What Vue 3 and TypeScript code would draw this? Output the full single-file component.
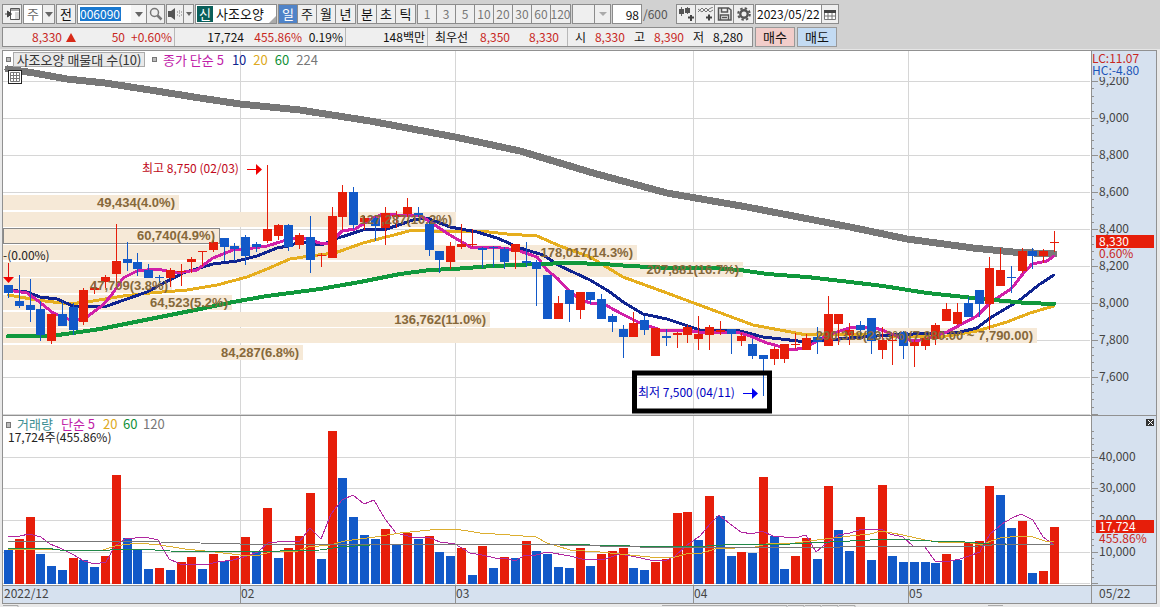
<script setup lang="ts">
import { ref } from 'vue'

type Tone = 'r' | 'b'
type Candle = [Tone, number, number, number, number]
type Point = [number, number]

const code = ref('006090')
const unit = ref('주')
const count = ref('98')
const date = ref('2023/05/22')
const period = ref('일')

const periods = ['일', '주', '월', '년']
const intraday = ['분', '초', '틱']
const intervals = ['1', '3', '5', '10', '20', '30', '60', '120']

const STEP = 10.784
const centre = (i: number): number => Math.round(8.5 + i * STEP - 0.5) + 0.5

// tone, wick top, wick bottom, body top, body bottom
const candles: Candle[] = [
  ['b', 285, 298, 285, 293], ['b', 275, 308, 301, 306], ['b', 279, 322, 305, 310], ['b', 301, 341, 309, 335],
  ['r', 314, 344, 314, 341], ['b', 301, 326, 314, 326], ['b', 303, 335, 307, 330], ['r', 288, 325, 290, 322],
  ['r', 282, 294, 288, 290], ['r', 275, 288, 277, 282], ['r', 224, 283, 261, 274], ['b', 242, 271, 259, 263],
  ['b', 253, 276, 262, 269], ['b', 264, 278, 270, 278], ['b', 275, 283, 277, 278], ['r', 268, 287, 270, 278],
  ['r', 264, 286, 271, 272], ['r', 257, 273, 259, 262], ['r', 251, 266, 251, 252], ['r', 240, 252, 242, 250],
  ['b', 238, 261, 238, 247], ['b', 243, 261, 246, 249], ['b', 235, 265, 237, 256], ['b', 242, 252, 244, 247],
  ['r', 165, 243, 229, 241], ['r', 224, 240, 225, 236], ['b', 224, 251, 225, 247], ['r', 233, 249, 235, 245],
  ['b', 216, 273, 237, 260], ['r', 253, 267, 255, 256], ['r', 207, 258, 216, 258], ['r', 185, 230, 192, 217],
  ['b', 187, 229, 192, 225], ['r', 216, 230, 218, 222], ['b', 215, 241, 218, 226], ['r', 207, 245, 213, 228],
  ['r', 211, 228, 215, 217], ['r', 198, 217, 207, 214], ['b', 207, 217, 213, 215], ['b', 221, 256, 224, 250],
  ['b', 251, 273, 251, 260], ['r', 242, 269, 246, 262], ['r', 224, 249, 244, 247], ['r', 229, 247, 244, 245],
  ['b', 247, 268, 248, 250], ['b', 246, 267, 247, 248], ['b', 247, 269, 249, 262], ['r', 244, 269, 244, 252],
  ['b', 242, 267, 261, 263], ['b', 260, 306, 262, 269], ['b', 275, 319, 275, 319], ['r', 296, 319, 303, 319],
  ['b', 290, 322, 290, 304], ['r', 292, 319, 292, 310], ['b', 292, 304, 292, 300], ['b', 294, 319, 299, 319],
  ['b', 314, 332, 316, 322], ['b', 325, 358, 329, 337], ['r', 312, 337, 323, 337], ['b', 316, 335, 320, 330],
  ['r', 328, 356, 328, 356], ['b', 329, 346, 336, 338], ['r', 332, 348, 333, 335], ['r', 325, 343, 327, 335],
  ['r', 316, 350, 334, 339], ['r', 325, 350, 327, 335], ['r', 321, 335, 330, 332], ['b', 329, 354, 329, 334],
  ['r', 333, 346, 336, 341], ['b', 339, 359, 344, 356], ['b', 355, 396, 355, 359], ['r', 347, 365, 349, 359],
  ['r', 344, 363, 344, 359], ['r', 333, 349, 344, 345], ['r', 334, 350, 338, 350], ['b', 327, 354, 337, 342],
  ['r', 296, 346, 314, 346], ['r', 314, 345, 314, 324], ['r', 323, 345, 330, 335], ['b', 321, 335, 325, 330],
  ['b', 318, 354, 318, 341], ['r', 327, 359, 340, 350], ['r', 335, 365, 340, 341], ['b', 331, 359, 332, 346],
  ['r', 340, 367, 342, 346], ['r', 336, 350, 338, 346], ['r', 323, 345, 325, 339], ['r', 303, 321, 309, 321],
  ['r', 303, 325, 312, 324], ['b', 297, 317, 303, 317], ['b', 290, 317, 290, 304], ['r', 257, 330, 268, 304],
  ['r', 248, 286, 270, 286], ['b', 266, 293, 277, 278], ['r', 248, 273, 251, 271], ['b', 248, 269, 251, 256],
  ['r', 249, 263, 251, 256], ['r', 231, 252, 242, 243],
]

const volumes: [Tone, number][] = [
  ['b', 550], ['r', 539], ['r', 517], ['b', 554], ['b', 566], ['b', 570], ['r', 558], ['b', 560], ['b', 567], ['r', 556],
  ['r', 475], ['b', 538], ['b', 549], ['b', 569], ['r', 568], ['b', 570], ['r', 562], ['r', 557], ['b', 569], ['r', 554],
  ['b', 561], ['r', 556], ['r', 537], ['b', 552], ['r', 508], ['b', 558], ['r', 548], ['r', 536], ['r', 493], ['b', 559],
  ['r', 431], ['b', 478], ['b', 517], ['b', 535], ['b', 539], ['r', 529], ['b', 544], ['r', 533], ['b', 539], ['r', 536],
  ['b', 552], ['b', 556], ['r', 548], ['b', 575], ['r', 546], ['b', 568], ['r', 557], ['b', 558], ['r', 541], ['b', 551],
  ['b', 554], ['b', 567], ['b', 568], ['r', 548], ['b', 566], ['r', 554], ['r', 551], ['r', 548], ['b', 568], ['b', 570],
  ['r', 562], ['r', 559], ['r', 513], ['r', 512], ['b', 540], ['r', 496], ['b', 516], ['b', 556], ['r', 552], ['b', 553],
  ['r', 477], ['b', 536], ['b', 569], ['r', 556], ['r', 538], ['b', 559], ['r', 486], ['b', 530], ['b', 551], ['r', 517],
  ['b', 560], ['r', 485], ['b', 556], ['b', 562], ['b', 562], ['b', 562], ['b', 563], ['r', 554], ['b', 560], ['r', 543],
  ['r', 541], ['r', 486], ['b', 495], ['b', 528], ['r', 521], ['b', 573], ['r', 571], ['r', 527],
]

const bands = [
  { end: 179, text: '49,434(4.0%)' },
  { end: 456, text: '127,287(10.2%)' },
  { end: 219, text: '60,740(4.9%)', current: true },
  { end: 637, text: '178,017(14.3%)' },
  { end: 743, text: '207,881(16.7%)' },
  { end: 172, text: '47,709(3.8%)' },
  { end: 232, text: '64,523(5.2%)' },
  { end: 490, text: '136,762(11.0%)' },
  { end: 1037, text: '290,318(23.3%)(7,880.00 ~ 7,790.00)' },
  { end: 303, text: '84,287(6.8%)' },
].map((b, i) => ({ ...b, y: Math.round(195 + i * 16.65) }))

const path = (pts: Point[]): string => pts.map(p => p.join(',')).join(' ')

const priceLines: { cls: string; pts: Point[] }[] = [
  { cls: 'ma224', pts: [[8, 69], [34, 73], [67, 79], [105, 83], [150, 90], [200, 98], [240, 104], [300, 110], [370, 121], [455, 137], [520, 151], [570, 166], [593, 173], [667, 193], [747, 207], [850, 227], [907, 239], [973, 248], [1013, 252], [1054, 254]] },
  { cls: 'ma20', pts: [[8, 295], [37, 300], [70, 304], [93, 301], [123, 296], [150, 293], [187, 290], [217, 285], [247, 277], [267, 269], [290, 259], [310, 256], [335, 253], [363, 243], [390, 236], [413, 230], [427, 231], [480, 231], [507, 234], [537, 236], [560, 246], [590, 257], [623, 277], [667, 293], [710, 309], [753, 325], [807, 335], [850, 334], [870, 335], [907, 337], [947, 336], [977, 331], [1007, 322], [1030, 313], [1054, 306]] },
  { cls: 'ma10', pts: [[8, 290], [27, 292], [40, 297], [57, 299], [73, 306], [107, 306], [127, 299], [147, 292], [160, 285], [183, 273], [213, 264], [237, 261], [257, 256], [277, 248], [288, 246], [300, 242], [322, 245], [335, 239], [363, 230], [387, 229], [413, 220], [427, 218], [450, 227], [477, 232], [497, 238], [520, 248], [543, 255], [560, 266], [590, 280], [610, 292], [623, 302], [643, 314], [667, 319], [700, 330], [740, 331], [763, 337], [807, 342], [850, 338], [890, 335], [937, 333], [960, 332], [977, 328], [990, 318], [1020, 300], [1040, 284], [1054, 275]] },
  { cls: 'ma5', pts: [[8, 290], [27, 293], [37, 300], [53, 313], [73, 321], [87, 317], [103, 305], [113, 293], [123, 278], [137, 271], [157, 269], [177, 273], [197, 270], [213, 258], [233, 250], [253, 248], [267, 246], [283, 241], [300, 237], [320, 243], [330, 243], [342, 231], [355, 229], [373, 218], [383, 214], [397, 215], [420, 215], [430, 222], [450, 235], [472, 248], [493, 247], [517, 250], [537, 257], [547, 270], [558, 279], [568, 290], [580, 299], [590, 303], [602, 303], [620, 313], [640, 323], [663, 331], [687, 330], [703, 333], [737, 332], [750, 336], [767, 343], [793, 350], [807, 347], [827, 335], [853, 327], [873, 327], [890, 333], [900, 338], [913, 341], [927, 339], [947, 332], [977, 316], [990, 303], [1012, 288], [1022, 275], [1032, 264], [1047, 261], [1054, 256]] },
  { cls: 'ma60', pts: [[8, 336], [50, 336], [73, 333], [100, 329], [150, 319], [200, 309], [233, 302], [267, 296], [290, 293], [320, 289], [360, 282], [400, 274], [430, 270], [453, 269], [493, 266], [537, 264], [570, 263], [603, 264], [630, 266], [670, 268], [713, 268], [740, 270], [767, 274], [807, 277], [850, 282], [883, 286], [927, 293], [983, 299], [1027, 303], [1054, 304]] },
]

const volumeLines: { cls: string; pts: Point[] }[] = [
  { cls: 'v5', pts: [[8, 536], [20, 536], [29, 534], [41, 537], [50, 544], [60, 548], [72, 554], [84, 561], [95, 564], [106, 562], [115, 546], [125, 539], [145, 537], [158, 540], [169, 559], [180, 564], [205, 565], [217, 562], [233, 560], [247, 556], [258, 552], [268, 543], [277, 542], [300, 541], [310, 528], [321, 539], [331, 514], [342, 500], [353, 495], [364, 504], [374, 500], [385, 519], [396, 533], [412, 537], [428, 537], [440, 542], [455, 544], [470, 553], [482, 555], [495, 558], [505, 558], [515, 561], [525, 555], [536, 555], [547, 552], [570, 556], [582, 559], [602, 560], [620, 554], [636, 557], [650, 560], [665, 561], [675, 556], [687, 545], [700, 536], [710, 524], [719, 515], [730, 524], [741, 532], [752, 534], [762, 531], [773, 536], [795, 538], [806, 535], [816, 552], [827, 543], [838, 535], [850, 533], [862, 529], [881, 529], [890, 534], [903, 537], [913, 546], [925, 547], [935, 561], [950, 561], [960, 559], [969, 556], [980, 552], [990, 534], [1002, 524], [1012, 518], [1021, 514], [1033, 520], [1043, 537], [1053, 544]] },
  { cls: 'v20', pts: [[8, 550], [30, 549], [60, 550], [100, 551], [115, 546], [137, 543], [160, 545], [185, 549], [215, 552], [240, 555], [260, 555], [270, 552], [298, 551], [308, 547], [330, 545], [345, 541], [375, 537], [400, 533], [430, 530], [440, 529], [455, 529], [480, 533], [510, 535], [536, 537], [547, 543], [570, 550], [600, 552], [630, 555], [650, 557], [665, 558], [675, 557], [690, 553], [702, 553], [715, 549], [755, 547], [770, 543], [795, 543], [825, 539], [850, 536], [870, 534], [881, 531], [903, 535], [925, 540], [938, 542], [965, 542], [980, 545], [1000, 538], [1020, 536], [1033, 537], [1045, 541], [1054, 542]] },
  { cls: 'v60', pts: [[8, 548], [45, 548], [60, 550], [110, 550], [140, 549], [170, 551], [240, 552], [320, 550], [340, 547], [370, 545], [450, 544], [590, 545], [630, 546], [690, 547], [740, 544], [790, 544], [850, 541], [890, 539], [930, 541], [965, 542], [990, 544], [1054, 545]] },
  { cls: 'v120', pts: [[8, 541], [120, 541], [200, 543], [240, 544], [400, 544], [560, 545], [640, 547], [840, 547], [980, 546], [1005, 544], [1054, 545]] },
]

const priceTicks = ['9,200', '9,000', '8,800', '8,600', '8,400', '8,200', '8,000', '7,800', '7,600', ''].map((text, i) => ({ text, y: 81 + i * 37 }))
const volumeTicks = [
  { text: '40,000', y: 457 }, { text: '30,000', y: 488 }, { text: '20,000', y: 520 }, { text: '10,000', y: 552 }, { text: '', y: 583 },
]
const minorTicks: number[] = []
for (let k = 0; k < 46; k++) if (k % 5) minorTicks.push(Math.round(81 + k * 7.4))
for (let k = 1; k < 25; k++) if (k % 5) minorTicks.push(Math.round(583 - k * 6.32))

const months = [{ text: '02', x: 240 }, { text: '03', x: 455 }, { text: '04', x: 693 }, { text: '05', x: 908 }]
</script>

<template>
  <main class="app">
    <header class="bars">
      <div class="toolbar">
        <button class="btn icon" aria-label="패널">
          <svg width="15" height="14" viewBox="0 0 15 14"><path d="M5.5 1.5h9v11h-9zM5 3h10" fill="#fff" stroke="#555" /><path d="M10 5h4v7h-4z" fill="#d8d8d8" /><path d="M0 7h3M2.500 4v6l4-3z" fill="#444" stroke="#444" /></svg>
        </button>
        <div class="combo unit">
          <select v-model="unit" aria-label="구분"><option>주</option></select>
          <span class="drop"><svg width="8" height="5"><path d="M0 0h8L4 5z" fill="#666" /></svg></span>
        </div>
        <button class="btn prev">전</button>
        <div class="combo code">
          <input v-model="code" aria-label="종목코드" />
          <span class="drop plain"><svg width="8" height="5"><path d="M0 0h8L4 5z" fill="#666" /></svg></span>
          <button class="inner" aria-label="검색">
            <svg width="14" height="14" viewBox="0 0 14 14" fill="none" stroke="#777"><circle cx="5.500" cy="5.500" r="4" stroke-width="1.500" /><path d="M8.500 8.500l4 4" stroke-width="2.500" /></svg>
          </button>
        </div>
        <div class="combo sound">
          <button class="inner" aria-label="소리">
            <svg width="14" height="12" viewBox="0 0 14 12"><path d="M0 3h3l4-3v12L3 9H0z" fill="#555" /><path d="M9 4h1M9 7h1M11 3h1M11 5h1M11 8h1M13 4h1M13 7h1" stroke="#777" /></svg>
          </button>
          <button class="inner small" aria-label="소리 선택"><svg width="6" height="4"><path d="M0 0h6L3 4z" fill="#666" /></svg></button>
        </div>
        <div class="combo stock">
          <span class="tag">신</span><span class="name">사조오양</span>
          <svg class="corner" width="7" height="7"><path d="M7 0v7H0z" fill="#aaa" /></svg>
        </div>
        <div class="group">
          <button v-for="p in periods" :key="p" class="seg" :class="{ on: p === period }" @click="period = p">{{ p }}</button>
        </div>
        <div class="group">
          <button v-for="p in intraday" :key="p" class="seg">{{ p }}</button>
        </div>
        <div class="group">
          <button v-for="p in intervals" :key="p" class="seg dim">{{ p }}</button>
        </div>
        <div class="combo custom">
          <select aria-label="사용자 주기" disabled><option></option></select>
          <span class="drop"><svg width="8" height="4"><path d="M0 0h8L4 4z" fill="#aaa" /></svg></span>
        </div>
        <input v-model="count" class="count" aria-label="조회 개수" />
        <span class="total">/600</span>
        <div class="group tools">
          <button class="seg" aria-label="차트 추가"><svg width="15" height="14" viewBox="0 0 15 14"><path d="M2.500 0v9M8.500 0v7" stroke="#666" /><path d="M0 2h5v5H0zM6 1h5v5H6z" fill="#555" /><path d="M9 10.500h6M12 8v6" stroke="#444" stroke-width="2" /></svg></button>
          <button class="seg" aria-label="지표 추가"><svg width="15" height="14" viewBox="0 0 15 14"><path d="M0 5l4-4 4 4 3-3 4-2M0 2l4 3 4-4 4 4 3-2" fill="none" stroke="#777" /><path d="M8 10.500h6M11 7.500v6" stroke="#444" stroke-width="2" /></svg></button>
          <button class="seg" aria-label="저장"><svg width="15" height="14" viewBox="0 0 15 14"><path d="M1.500 1h10l2.500 2v10h-12.500zM4.500 1v4h6V1M3.500 13V8h8v5M5 10.500h5" fill="#eee" stroke="#555" stroke-width="1.500" /></svg></button>
          <button class="seg" aria-label="설정"><svg width="14" height="14" viewBox="0 0 14 14" fill="none" stroke="#555"><circle cx="7" cy="7" r="3.700" stroke-width="2.400" /><circle cx="7" cy="7" r="5.800" stroke-width="2" stroke-dasharray="2.400 2.155" /></svg></button>
        </div>
        <div class="combo date">
          <input v-model="date" aria-label="날짜" />
          <button class="inner" aria-label="달력"><svg width="12" height="11" viewBox="0 0 12 11"><path d="M.5 1.500h11v9H.5zM4 4v7M8 4v7M1 7h10" fill="#fff" stroke="#777" /><path d="M0 1h12v3H0z" fill="#444" /></svg></button>
        </div>
      </div>

      <div class="quote">
        <div class="cells">
          <div class="cell now"><b class="up">8,330</b><svg class="tri" width="10" height="9"><path d="M5 0l5 9H0z" fill="#d82a18" /></svg><b class="up diff">50</b><b class="up rate">+0.60%</b></div>
          <div class="cell vol"><b>17,724</b><b class="up ratio">455.86%</b><b class="turn">0.19%</b></div>
          <div class="cell amount"><b>148백만</b></div>
          <div class="cell best"><b>최우선</b><b class="up">8,350</b><b class="up ask">8,330</b></div>
          <div class="cell ohl"><b>시</b><b class="up">8,330</b><b>고</b><b class="up">8,390</b><b>저</b><b>8,280</b></div>
        </div>
        <button class="trade buy">매수</button>
        <button class="trade sell">매도</button>
      </div>
    </header>

    <section class="chart">
      <svg class="plot" viewBox="0 50 1160 557" role="img" aria-label="사조오양 일봉 차트">
        <rect x="0" y="50" width="1160" height="557" fill="#e9e9e9" />
        <rect x="2" y="50" width="1155" height="554" fill="#919191" />
        <rect x="3" y="51" width="1088" height="534" fill="#fff" />
        <rect x="1092" y="51" width="64" height="552" fill="#d6e1ef" />
        <rect x="3" y="586" width="1088" height="17" fill="#d6e1ef" />

        <g class="grid">
          <path v-for="t in priceTicks" :key="'p' + t.y" :d="`M3 ${t.y + 0.5}H1090`" />
          <path v-for="t in volumeTicks" :key="'v' + t.y" :d="`M3 ${t.y + 0.5}H1090`" />
          <path v-for="m in months" :key="m.x" :d="`M${m.x + 0.5} 51V585`" />
        </g>

        <rect v-for="b in bands" :key="b.y" x="3" :y="b.y" :width="b.end - 3" height="15" :class="['band', { current: b.current }]" />

        <polyline v-for="l in priceLines" :key="l.cls" :class="['line', l.cls]" :points="path(l.pts)" />
        <g v-for="(c, i) in candles" :key="i" :class="c[0]">
          <rect :x="centre(i) - 0.5" :y="c[1]" width="1" :height="c[2] - c[1]" />
          <rect :x="centre(i) - 4.5" :y="c[3]" width="9" :height="c[4] - c[3]" />
        </g>
        <text v-for="b in bands" :key="b.text" class="share" :x="b.end - 4" :y="b.y + 12">{{ b.text }}</text>

        <text x="3" y="260" class="ink">-(0.00%)</text>
        <path d="M8.500 263V278" stroke="#e01010" />
        <path d="M3 277h11l-5.500 6z" fill="#f00000" />
        <text x="142" y="173" class="high">최고 8,750 (02/03)</text>
        <path d="M247 169.500h9" stroke="#f00000" />
        <path d="M256 164v11l6-5.500z" fill="#f00000" />
        <rect x="634.500" y="373" width="135" height="38" fill="none" stroke="#000" stroke-width="5" />
        <text x="638" y="397" class="low">최저 7,500 (04/11)</text>
        <path d="M743 393.500h9" stroke="#0000f0" />
        <path d="M752 388v11l6-5.500z" fill="#0000f0" />

        <path d="M3 415.500H1156M3 585.500H1156M1091.500 51V603" stroke="#919191" />
        <rect v-for="(v, i) in volumes" :key="'b' + i" :class="v[0]" :x="centre(i) - 4.5" :y="v[1]" width="9" :height="584 - v[1]" />
        <polyline v-for="l in volumeLines" :key="l.cls" :class="['thin', l.cls]" :points="path(l.pts)" />

        <rect x="6.500" y="422.500" width="4" height="5" fill="#bbb" stroke="#777" />
        <text y="429" class="head"><tspan x="17" fill="#3b8d92">거래량</tspan><tspan x="61" fill="#c020a8">단순 5</tspan><tspan x="103" fill="#dda820">20</tspan><tspan x="123" fill="#109038">60</tspan><tspan x="143" fill="#777">120</tspan></text>
        <text x="8" y="442" class="ink">17,724주(455.86%)</text>

        <g stroke="#919191">
          <path v-for="t in priceTicks" :key="'tp' + t.y" :d="`M1092 ${t.y + 0.5}h6`" />
          <path v-for="t in volumeTicks" :key="'tv' + t.y" :d="`M1092 ${t.y + 0.5}h6`" />
          <path v-for="y in minorTicks" :key="'m' + y" :d="`M1092 ${y + 0.5}h2`" />
          <path v-for="m in months" :key="'mx' + m.x" :d="`M${m.x + 0.5} 586v17`" />
        </g>
        <g class="axis">
          <text v-for="t in priceTicks" :key="'lp' + t.y" x="1099" :y="t.y + 4">{{ t.text }}</text>
          <text v-for="t in volumeTicks" :key="'lv' + t.y" x="1099" :y="t.y + 4">{{ t.text }}</text>
          <text x="4" y="598">2022/12</text>
          <text v-for="m in months" :key="m.text" :x="m.x + 1" y="598">{{ m.text }}</text>
          <text x="1099" y="598">05/22</text>
        </g>
        <rect x="1092" y="51" width="64" height="26" fill="#d6e1ef" />
        <text x="1092" y="63" fill="#c8281e">LC:11.07</text>
        <text x="1092" y="75" fill="#1c55b8">HC:-4.80</text>
        <rect x="1096" y="235" width="58" height="13" fill="#e61e0a" />
        <text x="1099" y="246" fill="#fff">8,330</text>
        <text x="1099" y="258" fill="#c8281e">0.60%</text>
        <rect x="1096" y="520" width="58" height="13" fill="#e61e0a" />
        <text x="1099" y="531" fill="#fff">17,724</text>
        <text x="1099" y="543" fill="#c8281e">455.86%</text>

        <rect x="8.500" y="70.500" width="13" height="13" fill="#fff" stroke="#222" />
        <path d="M10.500 72.500h9v9h-9zM13.500 72v10M16.500 72v10M10 75.500h10M10 78.500h10" fill="none" stroke="#777" />

        <path d="M3 605.500h15v1.500M662 605.500h125v1.500M788 605.500h16v1.500M805 605.500h16v1.500M822 605.500h16v1.500M839 605.500h16v1.500M988 605.500h15" fill="none" stroke="#aaa" />
      </svg>

      <div class="legend">
        <i class="mark"></i>
        <button class="title">사조오양 매물대 수(10)</button>
        <i class="mark"></i>
        <span class="c5">종가 단순 5</span><span class="c10">10</span><span class="c20">20</span><span class="c60">60</span><span class="c224">224</span>
      </div>
      <button class="close" aria-label="닫기"><svg width="5" height="5"><path d="M0 0l5 5M5 0L0 5" stroke="#fff" /></svg></button>
    </section>
  </main>
</template>

<style>
body {
  margin: 0;
  background: #e9e9e9;
}
</style>

<style scoped>
.app {
  font-family: "Noto Sans CJK KR", sans-serif;
  font-size: 12px;
  line-height: 18px;
  color: #111;
  overflow: hidden;
}
button, input, select {
  font: inherit;
  color: inherit;
  margin: 0;
  padding: 0;
  border: 0;
  border-radius: 0;
  background: none;
  appearance: none;
  box-sizing: border-box;
  outline: 0;
  min-width: 0;
}
b { font-weight: 400; }
svg { flex: none; }
.bars {
  height: 50px;
  box-sizing: border-box;
  padding: 4px 2px 0;
  background: #d1d1d1;
  border-bottom: 1px solid #e6e6e6;
  white-space: nowrap;
}
.toolbar, .quote { display: flex; }
.quote { margin-top: 3px; }
.btn, .combo, .group, .count {
  height: 20px;
  flex: none;
  box-sizing: border-box;
  border: 1px solid #8c8c8c;
  background: #efefef;
}
.btn { display: flex; align-items: center; justify-content: center; width: 20px; margin-right: 1px; font-size: 13px; }
.combo { display: flex; align-items: stretch; background: #fff; margin-right: 1px; }
.drop, .inner {
  display: flex;
  flex: none;
  align-items: center;
  justify-content: center;
  width: 11px;
  background: #efefef;
  border-left: 1px solid #8c8c8c;
}
.drop.plain { width: 15px; border: 0; background: #f4f4f4; }
.inner { width: 18px; }
.inner.small { width: 10px; }
.unit { width: 32px; }
.unit select { flex: 1; padding-left: 3px; color: #666; font-size: 13px; }
.code { width: 88px; }
.code input { width: 41px; margin: 2px auto 2px 2px; background: #1878d0; color: #fff; line-height: 14px; }
.sound { width: 28px; }
.sound .inner:first-child { border: 0; flex: 1; }
.stock { width: 82px; position: relative; font-size: 13px; }
.tag { width: 16px; margin: 1px; background: #0a5f5a; color: #fff; text-align: center; line-height: 16px; }
.name { padding-left: 2px; }
.corner { position: absolute; right: 0; bottom: 0; }
.group { display: flex; margin-right: 1px; }
.seg {
  display: flex;
  flex: none;
  align-items: center;
  justify-content: center;
  width: 19px;
  border-right: 1px solid #8c8c8c;
  font-size: 13px;
}
.seg:last-child { border-right: 0; }
.seg.on { background: #4f83c8; color: #fff; }
.seg.dim { color: #777; font-size: 12px; }
.custom { width: 39px; background: #efefef; }
.custom select { flex: 1; }
.custom .drop { width: 15px; }
.count { width: 30px; background: #fff; text-align: right; padding-right: 2px; }
.total { width: 34px; color: #555; padding: 1px 0 0 1px; box-sizing: border-box; }
.date { width: 84px; }
.date input { flex: 1; padding-left: 1px; }
.date .inner { width: 17px; }

.cells {
  display: flex;
  width: 751px;
  height: 20px;
  box-sizing: border-box;
  border: 1px solid #8c8c8c;
  background: #efefef;
}
.cell { display: flex; flex: none; align-items: center; justify-content: flex-end; box-sizing: border-box; border-right: 1px solid #b8b8b8; padding-right: 2px; }
.cell:last-child { border: 0; }
.up { color: #c8281e; }
.now { width: 172px; }
.tri { margin-left: 4px; }
.diff { width: 49px; text-align: right; }
.rate { width: 47px; text-align: right; }
.vol { width: 171px; }
.ratio { width: 58px; text-align: right; }
.turn { width: 41px; text-align: right; }
.amount { width: 82px; }
.best { width: 140px; gap: 12px; padding-right: 8px; }
.best .ask { margin-left: 7px; }
.cell.ohl { flex: 1; gap: 9px; padding-right: 9px; }
.trade { width: 40px; height: 20px; margin-left: 2px; border: 1px solid #999; flex: none; font-size: 13px; }
.buy { background: #f2cdca; }
.sell { background: #c3dbf3; }

.chart { position: relative; }
.plot { display: block; width: 100%; height: auto; }
.plot text { font-size: 12px; }
.plot .head { font-size: 13px; }
.grid path { stroke: #d6d6d6; }
.band { fill: #f6e9d7; }
.band.current { stroke: #888; shape-rendering: crispEdges; }
.plot .share { font-family: "Liberation Sans", sans-serif; font-size: 13px; font-weight: 700; fill: #86683a; text-anchor: end; }
.r { fill: #e61e0a; }
.b { fill: #1259c8; }
.line { fill: none; stroke-width: 3; stroke-linejoin: round; stroke-linecap: round; shape-rendering: crispEdges; }
.ma224 { stroke: #777; stroke-width: 7; }
.ma60 { stroke: #10983c; stroke-width: 4; }
.ma20 { stroke: #e6ae1e; }
.ma10 { stroke: #102490; }
.ma5 { stroke: #d020a8; }
.thin { fill: none; stroke-width: 1; shape-rendering: crispEdges; }
.v5 { stroke: #b028a0; }
.v20 { stroke: #dcae30; }
.v60 { stroke: #208848; }
.v120 { stroke: #777; }
.ink { fill: #222; }
.high { fill: #c00820; }
.low { fill: #0000c0; }
.axis { fill: #444; }
.legend {
  position: absolute;
  top: 2px;
  left: 6px;
  display: flex;
  align-items: center;
  height: 15px;
  line-height: 15px;
  font-size: 13px;
}
.mark { width: 5px; height: 5px; box-sizing: border-box; border: 1px solid #777; background: #bbb; }
.title { height: 15px; width: 132px; line-height: 13px; margin: 0 7px 0 2px; border: 1px solid #aaa; background: #e9e9e9; color: #333; white-space: nowrap; }
.c5 { color: #c020a8; margin-left: 6px; }
.c10 { color: #102490; margin-left: 8px; }
.c20 { color: #dda820; margin-left: 7px; }
.c60 { color: #109038; margin-left: 7px; }
.c224 { color: #777; margin-left: 7px; }
.close {
  position: absolute;
  top: 369px;
  right: 6px;
  display: flex;
  align-items: center;
  justify-content: center;
  width: 8px;
  height: 7px;
  background: #333;
}
</style>
